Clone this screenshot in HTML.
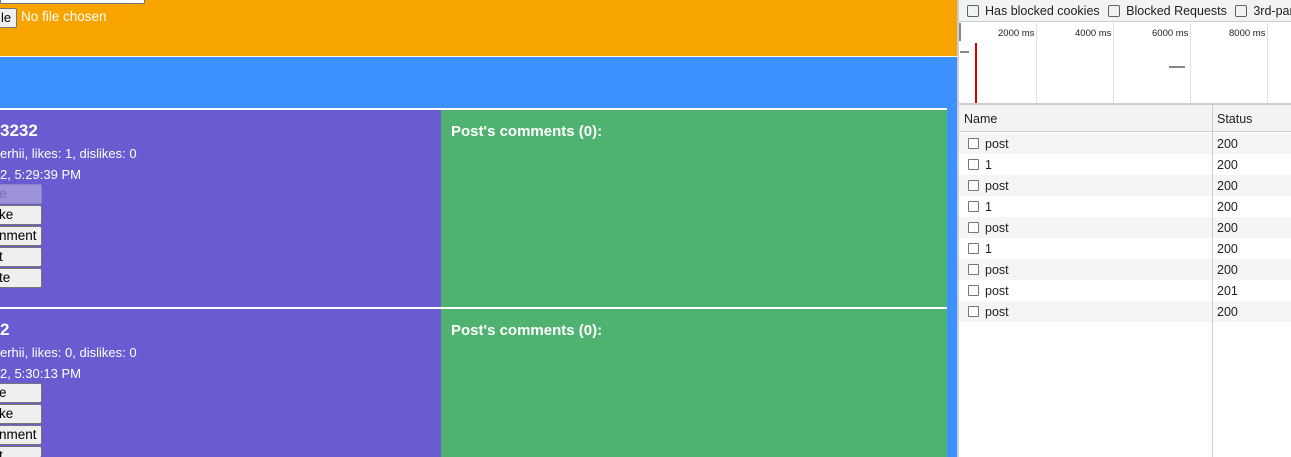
<!DOCTYPE html>
<html style="overflow:hidden;width:1291px;height:457px"><head><style>
*{margin:0;padding:0;box-sizing:border-box}
body{width:1291px;height:457px;overflow:hidden;position:relative;font-family:"Liberation Sans",Arial,sans-serif;background:#fff}
.a{position:absolute}
.btn{position:absolute;left:-10px;width:52px;height:20px;background:#efefef;border:1px solid #767676;border-radius:2px;font-size:13.5px;color:#000;padding-left:8px;line-height:18px;overflow:hidden}
.w{color:#fff}
.row{position:absolute;left:959px;width:332px;height:21px;font-size:12.5px;color:#202124;font-family:"Liberation Sans",sans-serif}
.row .cb{position:absolute;left:9px;top:5px;width:11px;height:11px;border:1px solid #767676;border-radius:1px;background:#fff}
.row .n{position:absolute;left:26px;top:4px}
.row .s{position:absolute;left:258px;top:4px}
.dv{font-family:"Liberation Sans",sans-serif}
</style></head><body>
<div class="a" style="left:0;top:0;width:957px;height:56px;background:#f7a400"></div>
<div class="a" style="left:0;top:-5px;width:145px;height:9px;background:#fff;border:1px solid #767676;border-radius:2px"></div>
<div class="a" style="left:-10px;top:8px;width:27px;height:20px;background:#efefef;border:1px solid #767676;border-radius:2px;font-size:13px;line-height:18px;padding-left:10px">le</div>
<div class="a w" style="left:21px;top:9px;font-size:13.5px">No file chosen</div>
<div class="a" style="left:0;top:57px;width:957px;height:400px;background:#3d91ff"></div>
<div class="a" style="left:0;top:108px;width:947px;height:2px;background:#fff"></div>
<div class="a" style="left:0;top:110px;width:441px;height:197px;background:#6a5cd0"></div>
<div class="a" style="left:441px;top:110px;width:506px;height:197px;background:#50b270"></div>
<div class="a" style="left:0;top:307px;width:947px;height:2px;background:#fff"></div>
<div class="a" style="left:0;top:309px;width:441px;height:148px;background:#6a5cd0"></div>
<div class="a" style="left:441px;top:309px;width:506px;height:148px;background:#50b270"></div>

<div class="a w" style="left:0;top:121px;font-size:17px;font-weight:bold">3232</div>
<div class="a w" style="left:0;top:146px;font-size:13px">erhii, likes: 1, dislikes: 0</div>
<div class="a w" style="left:0;top:167px;font-size:13px">2, 5:29:39 PM</div>
<div class="btn" style="top:184px;background:#9b92d9;border-color:#8a82c8;color:#7a70c0">e</div>
<div class="btn" style="top:205px">ke</div>
<div class="btn" style="top:226px">nment</div>
<div class="btn" style="top:247px">t</div>
<div class="btn" style="top:268px">te</div>
<div class="a w" style="left:451px;top:123px;font-size:15px;font-weight:bold">Post's comments (0):</div>

<div class="a w" style="left:0;top:320px;font-size:17px;font-weight:bold">2</div>
<div class="a w" style="left:0;top:345px;font-size:13px">erhii, likes: 0, dislikes: 0</div>
<div class="a w" style="left:0;top:366px;font-size:13px">2, 5:30:13 PM</div>
<div class="btn" style="top:383px">e</div>
<div class="btn" style="top:404px">ke</div>
<div class="btn" style="top:425px">nment</div>
<div class="btn" style="top:446px;height:11px;border-bottom:none">t</div>
<div class="a w" style="left:451px;top:322px;font-size:15px;font-weight:bold">Post's comments (0):</div>

<!-- devtools -->
<div class="a" style="left:957px;top:0;width:2px;height:457px;background:#cbcdd1"></div>
<div class="a" style="left:959px;top:0;width:332px;height:22px;background:#f1f3f4;border-bottom:1px solid #cbcdd1"></div>
<div class="a dv" style="left:967px;top:4px;font-size:12.5px;color:#202124;white-space:nowrap">
<span style="display:inline-block;width:12px;height:12px;border:1px solid #5f6368;border-radius:2px;vertical-align:-2px;margin-right:6px"></span>Has blocked cookies
<span style="display:inline-block;width:12px;height:12px;border:1px solid #5f6368;border-radius:2px;vertical-align:-2px;margin:0 6px 0 5px"></span>Blocked Requests
<span style="display:inline-block;width:12px;height:12px;border:1px solid #5f6368;border-radius:2px;vertical-align:-2px;margin:0 6px 0 5px"></span>3rd-party</div>
<div class="a" style="left:1036px;top:23px;width:1px;height:80px;background:#e0e0e0"></div>
<div class="a" style="left:1113px;top:23px;width:1px;height:80px;background:#e0e0e0"></div>
<div class="a" style="left:1190px;top:23px;width:1px;height:80px;background:#e0e0e0"></div>
<div class="a" style="left:1267px;top:23px;width:1px;height:80px;background:#e0e0e0"></div>
<div class="a" style="left:959px;top:23px;width:2px;height:18px;background:#888"></div>
<div class="a dv" style="left:998px;top:28px;font-size:9.5px;color:#222">2000 ms</div>
<div class="a dv" style="left:1075px;top:28px;font-size:9.5px;color:#222">4000 ms</div>
<div class="a dv" style="left:1152px;top:28px;font-size:9.5px;color:#222">6000 ms</div>
<div class="a dv" style="left:1229px;top:28px;font-size:9.5px;color:#222">8000 ms</div>
<div class="a" style="left:960px;top:51px;width:9px;height:2px;background:#888"></div>
<div class="a" style="left:975px;top:43px;width:2px;height:60px;background:#d00"></div>
<div class="a" style="left:1169px;top:66px;width:16px;height:2px;background:#888"></div>
<div class="a" style="left:959px;top:103px;width:332px;height:2px;background:#cbcdd1"></div>
<div class="a dv" style="left:959px;top:105px;width:332px;height:27px;background:#f1f3f4;border-bottom:1px solid #cbcdd1;font-size:12.5px;color:#202124"><span class="a" style="left:5px;top:7px">Name</span><span class="a" style="left:258px;top:7px">Status</span></div>
<div class="row" style="top:133px;background:#f5f5f5"><div class="cb"></div><span class="n">post</span><span class="s">200</span></div>
<div class="row" style="top:154px"><div class="cb"></div><span class="n">1</span><span class="s">200</span></div>
<div class="row" style="top:175px;background:#f5f5f5"><div class="cb"></div><span class="n">post</span><span class="s">200</span></div>
<div class="row" style="top:196px"><div class="cb"></div><span class="n">1</span><span class="s">200</span></div>
<div class="row" style="top:217px;background:#f5f5f5"><div class="cb"></div><span class="n">post</span><span class="s">200</span></div>
<div class="row" style="top:238px"><div class="cb"></div><span class="n">1</span><span class="s">200</span></div>
<div class="row" style="top:259px;background:#f5f5f5"><div class="cb"></div><span class="n">post</span><span class="s">200</span></div>
<div class="row" style="top:280px"><div class="cb"></div><span class="n">post</span><span class="s">201</span></div>
<div class="row" style="top:301px;background:#f5f5f5"><div class="cb"></div><span class="n">post</span><span class="s">200</span></div>
<div class="a" style="left:1212px;top:105px;width:1px;height:352px;background:#cbcdd1"></div>
</body></html>
